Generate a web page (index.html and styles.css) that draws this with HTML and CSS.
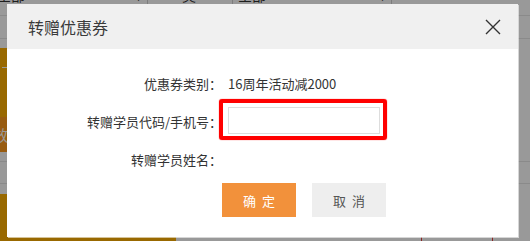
FILE: index.html
```html
<!DOCTYPE html>
<html lang="zh-CN">
<head>
    <meta charset="UTF-8">
    <meta name="viewport" content="width=device-width, initial-scale=1.0">
    <title>转赠优惠券</title>
    <link rel="stylesheet" href="styles.css">
</head>
<body>

    <!-- Page behind the dialog -->
    <div class="page">
        <div class="filters">
            <div class="filter filter-a"><span>全部</span><span class="caret">▼</span></div>
            <div class="filter filter-b"><span>类别</span><span class="caret">▪</span></div>
            <div class="filter filter-c"><span>全部</span><span class="caret">▼</span></div>
        </div>
        <div class="tabs"></div>

        <div class="coupon-row">
            <div class="coupon-card">
                <div class="card-top"><span class="card-dash"></span></div>
                <div class="card-tag">有效</div>
            </div>
        </div>
        <div class="row-gap"></div>

        <div class="coupon-row second">
            <div class="coupon-card tall"></div>
            <div class="coupon-info">有效期至 2017-12-31</div>
            <div class="coupon-actions"><span class="btn-del">删除</span></div>
        </div>
    </div>

    <!-- Mask -->
    <div class="mask"></div>

    <!-- Dialog -->
    <div class="dialog">
        <div class="dialog-header">
            <span class="dialog-title">转赠优惠券</span>
            <svg class="close" width="16" height="16" viewBox="0 0 16 16">
                <path d="M1 1 L15 15 M15 1 L1 15" stroke="#333" stroke-width="1.4" fill="none"/>
            </svg>
        </div>

        <div class="dialog-body">
            <div class="form-row">
                <label>优惠券类别：</label>
                <span class="value">16周年活动减2000</span>
            </div>
            <div class="form-row">
                <label for="stu_code">转赠学员代码/手机号：</label>
                <span class="highlight"><input type="text" id="stu_code"></span>
            </div>
            <div class="form-row">
                <label>转赠学员姓名：</label>
                <span class="value"></span>
            </div>
        </div>

        <div class="dialog-footer">
            <button class="btn btn-ok">确 定</button>
            <button class="btn btn-cancel">取 消</button>
        </div>
    </div>

</body>
</html>
```

FILE: styles.css
```css
/* General reset */
* {
    margin: 0;
    padding: 0;
    box-sizing: border-box;
    font-family: "Noto Sans CJK SC", "Noto Sans", sans-serif;
}

body {
    width: 530px;
    height: 241px;
    overflow: hidden;
    position: relative;
    background-color: #fff;
    color: #333;
    font-size: 13px;
}

/* Page behind */
.filters {
    display: flex;
    height: 31px;
    margin-top: -15px;
    border-bottom: 1px solid #e6e6e6;
    font-size: 14px;
    line-height: 20px;
}

.filter {
    display: flex;
    justify-content: space-between;
    border-right: 1px solid #d0d0d0;
    padding-right: 4px;
}

.filter .caret {
    font-size: 9px;
    padding-top: 3px;
}

.filter-a {
    width: 151px;
    margin-left: -3px;
}

.filter-b {
    width: 85px;
    padding-left: 34px;
    padding-right: 16px;
}

.filter-c {
    width: 159px;
    padding-left: 5px;
}

.tabs {
    height: 23px;
    border-bottom: 1px solid #e6e6e6;
}

.coupon-row {
    display: flex;
    height: 123px;
    padding-top: 9px;
    border-bottom: 1px solid #e6e6e6;
}

.coupon-row.second {
    height: 120px;
    padding-top: 10px;
    border-bottom: none;
}

.coupon-card {
    width: 176px;
}

.coupon-card.tall {
    height: 80px;
    background-color: #ffb000;
}

.card-top {
    height: 69px;
    background-color: #ffb000;
    padding-top: 19px;
}

.card-dash {
    display: block;
    width: 7px;
    height: 1px;
    margin-left: 2px;
    background-color: #fff;
}

.card-tag {
    height: 35px;
    background-color: #ff9a1c;
    color: #fff;
    font-size: 15px;
    line-height: 35px;
    text-indent: -22px;
    overflow: hidden;
}

.row-gap {
    height: 22px;
    border-bottom: 1px solid #e6e6e6;
}

.coupon-info {
    margin-left: 67px;
    padding-top: 51px;
    width: 178px;
    font-size: 12px;
}

.coupon-actions {
    padding-top: 38px;
}

.btn-del {
    display: inline-block;
    width: 72px;
    height: 26px;
    border: 1px solid #e34040;
    color: #d22;
    text-align: center;
    line-height: 24px;
    padding-top: 4px;
}

/* Mask */
.mask {
    position: absolute;
    top: 0;
    left: 0;
    right: 0;
    bottom: 0;
    background-color: rgba(0, 0, 0, 0.4);
}

/* Dialog */
.dialog {
    position: absolute;
    left: 7px;
    top: 4px;
    width: 511px;
    height: 233px;
    background-color: #fff;
    box-shadow: 1px 1px 0 rgba(255, 255, 255, 0.6);
}

.dialog-header {
    display: flex;
    align-items: center;
    justify-content: space-between;
    height: 45px;
    padding: 0 17px 0 21px;
    background-color: #f0f0f0;
}

.dialog-title {
    font-size: 16px;
    color: #3a3a3a;
}

.close {
    margin-top: 1px;
}

.dialog-body {
    padding-top: 15px;
}

.form-row {
    display: grid;
    grid-template-columns: 215px 1fr;
    column-gap: 6px;
    align-items: center;
    height: 38px;
}

.form-row label {
    text-align: right;
    white-space: nowrap;
    color: #333;
}

.form-row .value {
    color: #333;
}

.highlight {
    position: relative;
    display: inline-block;
    width: 152px;
    height: 27px;
    margin-top: -2px;
}

/* Red annotation box around the input */
.highlight::after {
    content: "";
    position: absolute;
    left: -9px;
    top: -8px;
    right: -7px;
    bottom: -6px;
    border: 4px solid #f00;
    border-radius: 3px;
    box-shadow: 0 0 1px #f00;
}

.highlight input {
    width: 152px;
    height: 27px;
    border: 1px solid #ddd;
    outline: none;
    padding: 0 6px;
    font-size: 13px;
}

.dialog-footer {
    display: flex;
    gap: 16px;
    margin-top: 5px;
    padding-left: 215px;
}

.btn {
    width: 74px;
    height: 34px;
    border: none;
    font-size: 13px;
    word-spacing: 3px;
    cursor: pointer;
}

.btn-ok {
    background-color: #f2913b;
    color: #fff;
}

.btn-cancel {
    background-color: #eee;
    color: #555;
}
```
